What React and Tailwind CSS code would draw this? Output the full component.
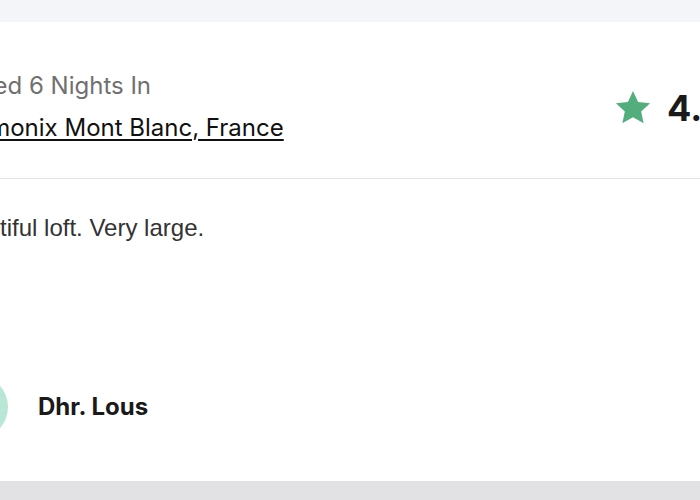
import React from 'react';

const Star = ({ className }) => (
  <svg viewBox="0 0 24 24" className={className} fill="currentColor">
    <path d="M12 1.8l3.05 6.6 7.2.8-5.35 4.9 1.5 7.1L12 17.6l-6.4 3.6 1.5-7.1L1.75 9.2l7.2-.8z" />
  </svg>
);

export default function App() {
  return (
    <div className="w-[700px] h-[500px] flex flex-col bg-[#e2e2e5] overflow-hidden">
      {/* page top */}
      <div className="h-[22px] shrink-0 bg-[#f4f5f9]" />

      {/* review card */}
      <div className="h-[459px] shrink-0 bg-white overflow-hidden">
        <div className="ml-[-56px] w-[820px]">
          {/* Header */}
          <div className="h-[157px] flex border-b border-[#e4e4e4]">
            <div className="w-[669px] shrink-0 pt-[48px] font-['Inter',sans-serif] text-[24px]">
              <p className="leading-[32px] text-[#707070]">Stayed 6 Nights In</p>
              <p className="mt-[10px] leading-[32px] text-[#111] underline underline-offset-[3px] decoration-[1.5px]">
                Chamonix Mont Blanc, France
              </p>
            </div>
            <div className="flex items-center gap-[14px] mt-[66px] self-start h-[40px]">
              <Star className="w-[40px] h-[40px] text-[#52ae7d]" />
              <span className="font-['Inter',sans-serif] font-bold text-[36px] leading-[40px] text-[#1a1a1a]">4.8</span>
            </div>
          </div>

          {/* Body */}
          <div className="pt-[33px]">
            <p className="font-['Liberation_Sans',Arial,sans-serif] text-[24px] leading-[32px] text-[#333]">
              Beautiful loft. Very large.
            </p>
            <div className="mt-[131px] flex items-center">
              <div className="w-16 h-16 rounded-full bg-[#b9e7d5] shrink-0" />
              <span className="ml-[30px] font-['Inter',sans-serif] font-bold text-[24px] text-[#1a1a1a]">Dhr. Lous</span>
            </div>
          </div>
        </div>
      </div>
    </div>
  );
}
